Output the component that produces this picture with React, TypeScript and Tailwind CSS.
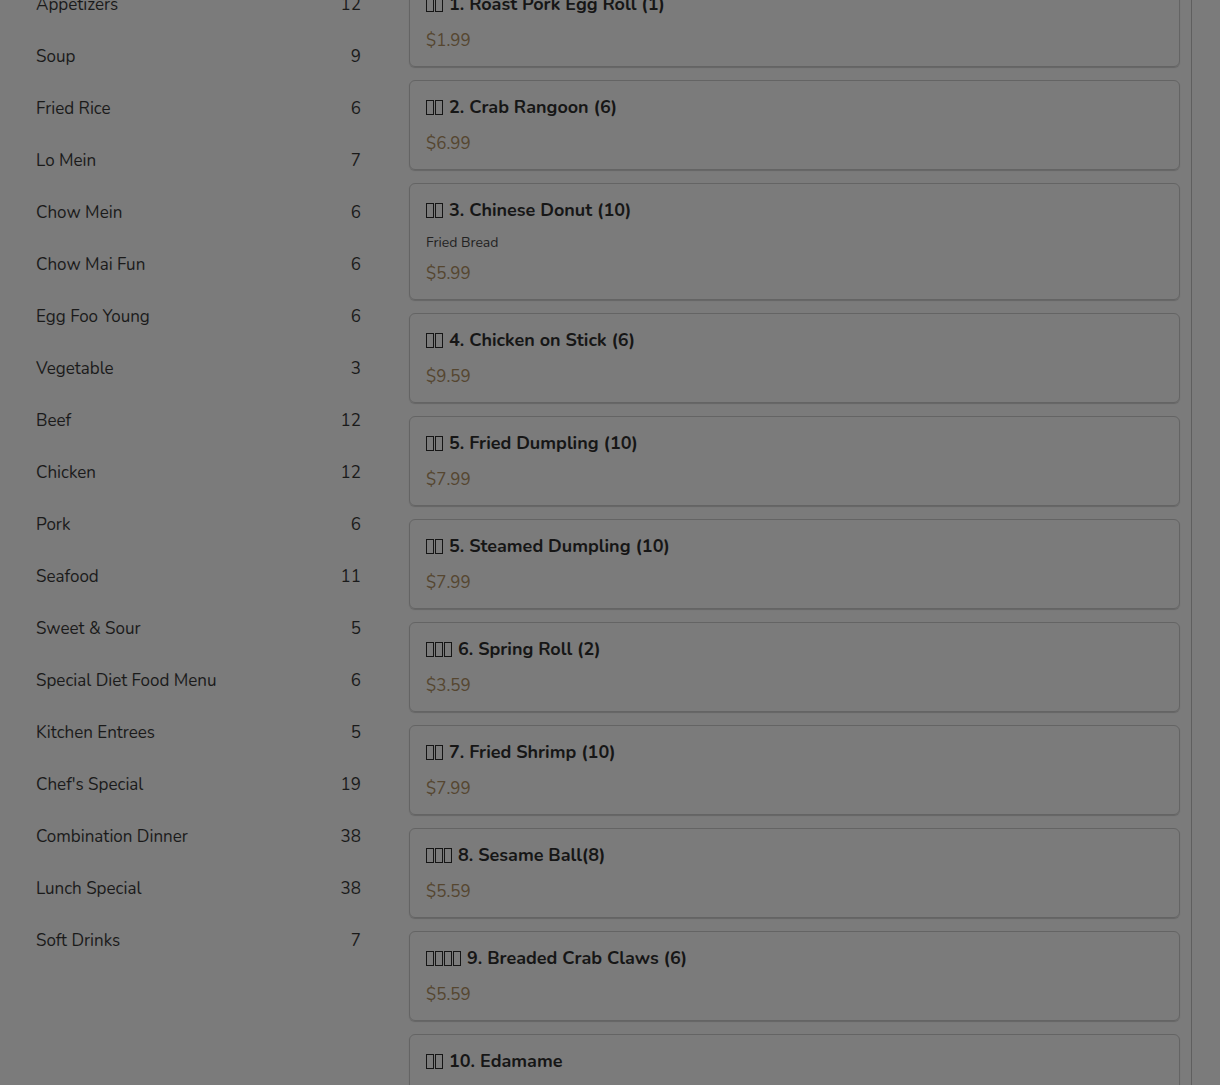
import React from "react"

const categories = [
  { name: "Appetizers", count: 12 },
  { name: "Soup", count: 9 },
  { name: "Fried Rice", count: 6 },
  { name: "Lo Mein", count: 7 },
  { name: "Chow Mein", count: 6 },
  { name: "Chow Mai Fun", count: 6 },
  { name: "Egg Foo Young", count: 6 },
  { name: "Vegetable", count: 3 },
  { name: "Beef", count: 12 },
  { name: "Chicken", count: 12 },
  { name: "Pork", count: 6 },
  { name: "Seafood", count: 11 },
  { name: "Sweet & Sour", count: 5 },
  { name: "Special Diet Food Menu", count: 6 },
  { name: "Kitchen Entrees", count: 5 },
  { name: "Chef's Special", count: 19 },
  { name: "Combination Dinner", count: 38 },
  { name: "Lunch Special", count: 38 },
  { name: "Soft Drinks", count: 7 },
]

// the chinese names show up as missing-glyph boxes in the shot
const items = [
  { boxes: 2, name: "1. Roast Pork Egg Roll (1)", price: "$1.99" },
  { boxes: 2, name: "2. Crab Rangoon (6)", price: "$6.99" },
  { boxes: 2, name: "3. Chinese Donut (10)", desc: "Fried Bread", price: "$5.99" },
  { boxes: 2, name: "4. Chicken on Stick (6)", price: "$9.59" },
  { boxes: 2, name: "5. Fried Dumpling (10)", price: "$7.99" },
  { boxes: 2, name: "5. Steamed Dumpling (10)", price: "$7.99" },
  { boxes: 3, name: "6. Spring Roll (2)", price: "$3.59" },
  { boxes: 2, name: "7. Fried Shrimp (10)", price: "$7.99" },
  { boxes: 3, name: "8. Sesame Ball(8)", price: "$5.59" },
  { boxes: 4, name: "9. Breaded Crab Claws (6)", price: "$5.59" },
  { boxes: 2, name: "10. Edamame", price: "$4.99" },
]

function Tofu({ n }: { n: number }) {
  return (
    <span className="inline-flex gap-[1px] mr-[6px] align-[-2px]">
      {Array.from({ length: n }).map((_, i) => (
        <span key={i} className="inline-block w-[8px] h-[15px] border border-[#151515]" />
      ))}
    </span>
  )
}

export default function App() {
  return (
    <div
      className="min-h-screen h-[1085px] overflow-hidden bg-[#7b7b7b]"
      style={{ fontFamily: '"Nunito", "Open Sans", "Noto Sans", sans-serif' }}
    >
      <div className="flex -mt-[23px]">
        {/* categories */}
        <aside className="w-[409px] shrink-0 pl-[36px] pr-[48px] pt-[2px]">
          {categories.map((c) => (
            <div key={c.name} className="flex items-center justify-between h-[52px] text-[17px] text-[#1a1a1a]">
              <span>{c.name}</span>
              <span>{c.count}</span>
            </div>
          ))}
        </aside>

        {/* menu items */}
        <main className="w-[783px] shrink-0 border-r border-[#5f5f5f] pr-[11px]">
          <div className="flex flex-col gap-[13px]">
            {items.map((it) => (
              <div
                key={it.name}
                className="rounded-[6px] border border-[#646464] shadow-[0_1px_1px_rgba(0,0,0,0.18)] px-4 pt-4 pb-[13px]"
              >
                <div className="text-[18px] leading-[20px] font-bold text-[#161616] mb-[13px]">
                  <Tofu n={it.boxes} />
                  {it.name}
                </div>
                {it.desc && <div className="text-[14px] leading-[20px] text-[#222222] mb-[7px]">{it.desc}</div>}
                <div className="pt-[2px] text-[17px] leading-[24px] text-[#554630]">{it.price}</div>
              </div>
            ))}
          </div>
        </main>
      </div>
    </div>
  )
}
